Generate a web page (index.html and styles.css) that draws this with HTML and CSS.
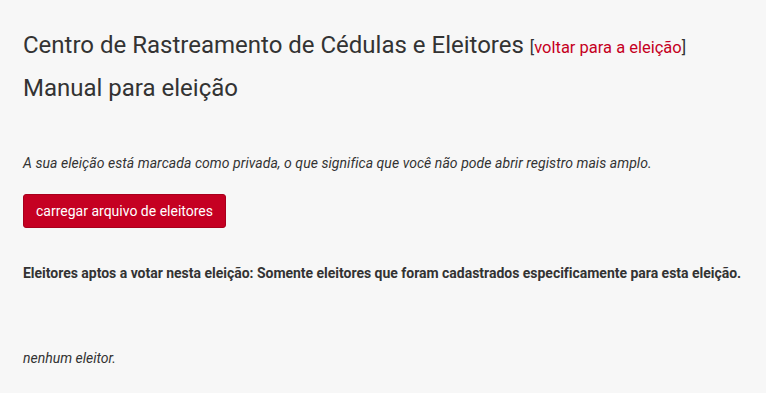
FILE: index.html
```html
<!DOCTYPE html>
<html lang="pt-BR">
<head>
    <meta charset="UTF-8">
    <meta name="viewport" content="width=device-width, initial-scale=1.0">
    <title>Centro de Rastreamento de Cédulas e Eleitores</title>
    <link rel="stylesheet" href="styles.css">
</head>
<body>
    <div class="container">
        <h2 class="title">Centro de Rastreamento de Cédulas e Eleitores <span class="back">[<a href="#">voltar para a eleição</a>]</span></h2>
        <h3 class="subtitle">Manual para eleição</h3>

        <p class="note"><em>A sua eleição está marcada como privada, o que significa que você não pode abrir registro mais amplo.</em></p>

        <a class="button" href="#">carregar arquivo de eleitores</a>

        <p class="eligibility"><b>Eleitores aptos a votar nesta eleição: Somente eleitores que foram cadastrados especificamente para esta eleição.</b></p>

        <p class="empty"><em>nenhum eleitor.</em></p>
    </div>
</body>
</html>
```

FILE: styles.css
```css
body {
    font-family: Roboto, "Liberation Sans", sans-serif;
    margin: 0;
    background-color: #f7f7f7;
    color: #333333;
}
.container {
    padding: 20px 10px 20px 23px;
}
.title {
    font-size: 24px;
    font-weight: 400;
    margin: 11px 0 0;
    line-height: 28px;
}
.back {
    font-size: 16.5px;
}
.back a {
    color: #c50022;
    text-decoration: none;
}
.subtitle {
    font-size: 24px;
    font-weight: 400;
    margin: 12px 0 0;
    line-height: 28px;
}
.note {
    font-size: 14px;
    margin: 53px 0 0;
    letter-spacing: 0.05px;
}
.button {
    display: inline-block;
    margin-top: 23px;
    padding: 8px 12px;
    background-color: #c50022;
    color: #ffffff;
    border: 1px solid #a8001c;
    border-radius: 3px;
    font-size: 14px;
    text-decoration: none;
}
.eligibility {
    font-size: 14px;
    margin: 37px 0 0;
    letter-spacing: -0.02px;
}
.empty {
    font-size: 14px;
    margin: 69px 0 0;
}
```
